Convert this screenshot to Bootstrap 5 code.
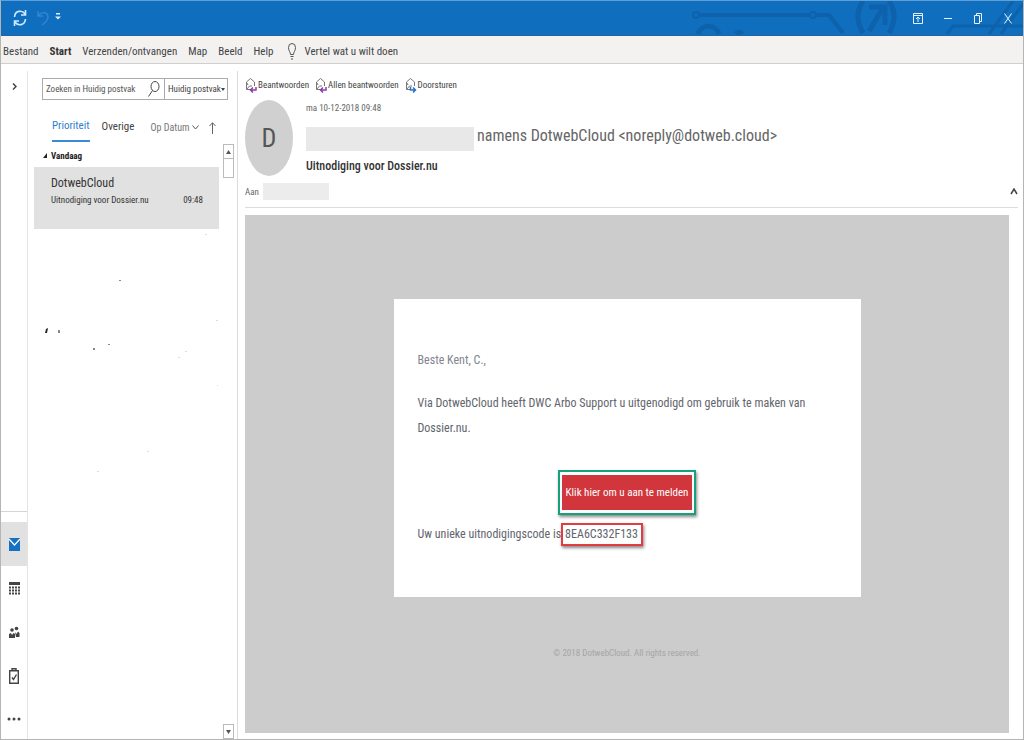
<!DOCTYPE html>
<html lang="nl">
<head>
<meta charset="utf-8">
<meta name="viewport" content="width=device-width, initial-scale=1">
<title>Uitnodiging voor Dossier.nu</title>
<link href="https://cdn.jsdelivr.net/npm/bootstrap@5.3.0/dist/css/bootstrap.min.css" rel="stylesheet">
<style>
body{font-family:"Roboto Condensed",Roboto,"Liberation Sans",sans-serif;font-size:9px;line-height:16px;color:#444}
.window{border:1px solid #b5b5b5;border-top-color:#5f9fd6}
.titlebar{background:#106ebe;height:35px;border-bottom:1px solid #2a62a0}
.circuit{width:340px;height:34px;right:0;top:0}
button{background:none;border:0;padding:0;color:inherit}
.qat{gap:10px;padding-left:12px}
.qat button:last-child{margin-left:-4px;margin-bottom:4px}
.winctl{width:30px;height:32px}
.ribbon{background:#f3f2f1;height:28px;border-bottom:1px solid #cfcfcf;gap:11px;padding:4px 0 0 2px;font-size:11px}
.ribbon a,.ribbon button{color:#444}
.ribbon b{color:#333}
.rail{width:27px;border-right:1px solid #e4e4e4;margin-top:7px}
.rail-main{border-top:1px solid #d4d4d4;padding-top:10px}
.rail-main button{height:44px;width:100%}
.rail-main button:last-child{height:41px}
.rail-main .on{background:#e1e1e1}
.mail-list{width:210px;border-right:1px solid #dcdcdc;padding-left:6px;margin-top:7px}
.search{border:1px solid #ababab;height:22px;margin:7px 9px 0 8px}
.search input{border:0;min-width:0;padding:0 0 0 3px;outline:0;color:#555}
.search input::placeholder{color:#555;opacity:1}
.search select{border:0;border-left:1px solid #ababab;background:none;appearance:none;width:63px;flex:none;padding:0 0 0 3px;color:#444}
.search .caret{right:2px;top:9px;pointer-events:none}
.tabs{margin:14px 0 0 18px;height:30px;font-size:11px;gap:12px}
.tabs button{height:28px;padding-bottom:3px}
.tabs .on{color:#2a7fd0;border-bottom:2px solid #3b8ad8}
.tabs .sort{font-size:10px;color:#777;gap:2px;padding-bottom:1px}
.day{height:23px;gap:4px;color:#222;padding-left:9px}
.msg{background:#e1e1e1;height:62px;padding:8px 16px 0 17px;color:#333}
.msg .from{font-size:12px;line-height:17px}
.bar{width:11px;margin-right:3px}
.bar span{border:1px solid #bbb;height:15px}
.bar .thumb{height:19px;border-top:0}
.reading{padding:13px 0 6px 7px}
.actions{gap:6px;height:16px}
.actions button{gap:1px;color:#444}
.avatar{width:48px;height:76px;border-radius:50%;background:#d0d0d0;font-size:26px;color:#555}
.head{gap:13px;margin-top:7px}
.date{line-height:16px;color:#666}
.sender{font-size:16px;line-height:26px;color:#666;margin-top:7px;gap:3px}
.redact{width:168px;height:24px;background:#e8e8e8;margin-top:4px}
.subject{font-size:12px;line-height:18px;margin:6px 0 0;color:#333;font-weight:500}
.to{gap:4px;height:32px;border-bottom:1px solid #dcdcdc;margin-right:5px;color:#666}
.to i{width:66px;height:17px;background:#ececec}
.canvas{background:#ccc;margin:7px 14px 0 0;padding-top:84px}
.letter{background:#fff;max-width:467px;width:90%;height:298px;padding:49px 24px 0;font-size:12px;line-height:25px;color:#62656d}
.letter .hi{color:#82868f;margin-bottom:18px}
.action-row{margin:29px 0 7px}
.cta{border:2px solid #16a07c;padding:3px 2px;box-shadow:1px 2px 3px #888}
.cta a{background:#d0363b;color:#fff;padding:0 4px;line-height:35px;font-size:11px}
.code{border:2px solid #e23b41;box-shadow:1px 2px 3px #888;padding:0 3px 0 2px;line-height:19px}
.foot{color:#a5a5a5;margin-top:48px}
</style>
</head>
<body>
<div class="window d-flex flex-column vh-100 overflow-hidden">
<header class="titlebar d-flex align-items-center justify-content-between position-relative flex-shrink-0">
  <svg class="circuit position-absolute" viewBox="0 0 340 34" fill="none" stroke="#0d62ab" stroke-width="4">
    <circle cx="13" cy="14" r="3" stroke-width="2"/><path d="M17 14H126"/><circle cx="130" cy="14" r="3" stroke-width="2"/><path d="M134 14H146L160 32"/>
    <path d="M15 33A11 11 0 0 1 36 33M53 33q3-4 6 0" stroke-width="5"/>
    <path d="M180 0Q170 15 180 32M206 0Q216 15 206 32" stroke-width="5"/><path d="M186 30L200 7M186 6H202V24" stroke-width="5"/>
    <path d="M264 33L270 25H340M306 33L330 0M318 33L340 3" stroke-width="3"/>
  </svg>
  <div class="qat d-flex align-items-center position-relative">
    <button aria-label="Alles verzenden/ontvangen"><svg width="14" height="18" viewBox="0 0 14 18" fill="none" stroke="#cfeaff" stroke-width="1.6"><path d="M1.500 8C2 1.500 9 .5 12 5M12.500 1V6H8M12.500 10C12 16.500 5 17.500 2 13M1.500 17V12H6"/></svg></button>
    <button aria-label="Ongedaan maken"><svg width="12" height="18" viewBox="0 0 12 18" fill="none" stroke="#3285cf" stroke-width="1.500"><path d="M1 2V7H6M1 7C6 1 11 4 11 8Q11 12 5 16"/></svg></button>
    <button aria-label="Aanpassen"><svg width="6" height="8" viewBox="0 0 6 8" fill="#d8efff"><path d="M1 0H5V1.500H1zM0 3.500H6L3 6.500z"/></svg></button>
  </div>
  <div class="d-flex position-relative">
    <button class="winctl" aria-label="Lint"><svg width="10" height="11" viewBox="0 0 10 11" fill="none" stroke="#e4f3ff"><path d="M.5 .5H9.500V10.500H.5zM.5 2.500H9.500M5 9V4M3 6L5 4L7 6"/></svg></button>
    <button class="winctl" aria-label="Minimaliseren"><svg width="8" height="11" viewBox="0 0 8 11" stroke="#e4f3ff"><path d="M0 5.500H8"/></svg></button>
    <button class="winctl" aria-label="Verkleinen"><svg width="8" height="11" viewBox="0 0 8 11" fill="none" stroke="#e4f3ff"><path d="M.5 2.500H5.500V10.500H.5zM2.500 2.500V.5H7.500V8.500H5.500"/></svg></button>
    <button class="winctl" aria-label="Sluiten"><svg width="8" height="11" viewBox="0 0 8 11" fill="none" stroke="#e4f3ff"><path d="M.5 .5L7.500 10.500M7.500 .5L.5 10.500"/></svg></button>
  </div>
</header>
<nav class="ribbon d-flex align-items-center flex-shrink-0">
  <a class="text-decoration-none" href="#">Bestand</a><a class="text-decoration-none" href="#"><b>Start</b></a><a class="text-decoration-none" href="#">Verzenden/ontvangen</a><a class="text-decoration-none" href="#">Map</a><a class="text-decoration-none" href="#">Beeld</a><a class="text-decoration-none" href="#">Help</a>
  <button class="d-flex align-items-center gap-2 ms-1"><svg width="8" height="17" viewBox="0 0 8 17" fill="none" stroke="#555"><path d="M2.500 11.500C2.500 9 .5 8 .5 4.500Q.5 .5 4 .5T7.500 4.500C7.500 8 5.500 9 5.500 11.500zM2.500 13.500H5.500M3 16H5"/></svg>Vertel wat u wilt doen</button>
</nav>
<div class="d-flex flex-grow-1 overflow-hidden">
  <aside class="rail d-flex flex-column justify-content-between flex-shrink-0">
    <button class="pt-2 mt-1" aria-label="Mappen uitvouwen"><svg class="d-block mx-auto" width="5" height="7" viewBox="0 0 5 7" fill="none" stroke="#444" stroke-width="1.500"><path d="M1 .5L4 3.500L1 6.500"/></svg></button>
    <div class="rail-main">
      <button class="on" aria-label="E-mail"><svg width="11" height="13" viewBox="0 0 11 13"><path fill="#1671c4" d="M0 0H11V13H0z"/><path d="M0 1L5.500 7L11 1" fill="none" stroke="#fff" stroke-width="1.200"/></svg></button>
      <button aria-label="Agenda"><svg width="11" height="14" viewBox="0 0 11 14" fill="none" stroke="#444"><path stroke-width="3" d="M0 1.500H11"/><path stroke-width="2" stroke-dasharray="2 1" d="M0 5.500H11M0 8.500H11M0 11.500H11"/></svg></button>
      <button aria-label="Personen"><svg width="11" height="13" viewBox="0 0 11 13" fill="#444"><circle cx="3" cy="4" r="1.800"/><circle cx="7.500" cy="2.500" r="1.800"/><path d="M0 12V8L2 7L3 9L4.500 7L6 8V12zM6 6L7.500 8L9 5.500L10.500 7V11H7z"/></svg></button>
      <button aria-label="Taken"><svg width="10" height="16" viewBox="0 0 10 16" fill="none" stroke="#444" stroke-width="1.400"><path d="M.7 2.700H9.300V15.300H.7zM3 2V.7H7V2M3 9.500L4.500 11.500L7.500 6.500"/></svg></button>
      <button aria-label="Meer"><svg width="14" height="4" viewBox="0 0 14 4" fill="#444"><circle cx="2" cy="2" r="1.500"/><circle cx="7" cy="2" r="1.500"/><circle cx="12" cy="2" r="1.500"/></svg></button>
    </div>
  </aside>
  <section class="mail-list d-flex flex-column flex-shrink-0">
    <div class="search d-flex flex-shrink-0 position-relative">
      <input class="flex-grow-1" type="text" placeholder="Zoeken in Huidig postvak" aria-label="Zoeken in Huidig postvak">
      <button class="pe-1" aria-label="Zoeken"><svg width="12" height="16" viewBox="0 0 12 16" fill="none" stroke="#444"><ellipse cx="7" cy="5.500" rx="4" ry="5"/><path d="M4.500 9.500L.5 15.500"/></svg></button>
      <select aria-label="Bereik"><option>Huidig postvak</option></select>
      <svg class="caret position-absolute" width="4" height="3" viewBox="0 0 4 3"><path d="M0 0H4L2 3z" fill="#444"/></svg>
    </div>
    <div class="tabs d-flex flex-shrink-0">
      <button class="on">Prioriteit</button><button>Overige</button>
      <button class="sort d-flex align-items-center ms-1">Op Datum<svg width="7" height="5" viewBox="0 0 7 5" fill="none" stroke="#555"><path d="M.5 .5L3.500 4L6.500 .5"/></svg><svg class="ms-2" width="7" height="12" viewBox="0 0 7 12" fill="none" stroke="#666"><path d="M3.500 12V1M.5 4L3.500 .7L6.500 4"/></svg></button>
    </div>
    <div class="d-flex flex-grow-1 overflow-hidden">
      <div class="flex-grow-1 me-1">
        <div class="day d-flex align-items-center fw-bold"><svg width="4" height="5" viewBox="0 0 4 5"><path d="M4 0V5H0z" fill="#222"/></svg>Vandaag</div>
        <div class="msg">
          <div class="from">DotwebCloud</div>
          <div class="subj d-flex justify-content-between"><span>Uitnodiging voor Dossier.nu</span><span>09:48</span></div>
        </div>
        <svg class="d-block" width="184" height="250" viewBox="0 0 184 250" fill="#888"><path fill="#222" d="M12 100L14 99L13 104H11z"/><path d="M24 101h2v3h-2zM85 51h2v1h-2zM59 119h2v2h-2zM74 115h2v1h-2z"/><path fill="#ddd" d="M171 5h2v1h-2zM182 91h2v1h-2zM144 128h2v1h-2zM151 122h2v1h-2zM183 156h1v1h-1zM113 222h2v1h-2zM63 242h2v1h-2z"/></svg>
      </div>
      <div class="bar d-flex flex-column flex-shrink-0">
        <span class="d-flex align-items-center justify-content-center"><svg width="5" height="4" viewBox="0 0 5 4"><path d="M0 4H5L2.500 0z" fill="#555"/></svg></span><span class="thumb"></span>
        <span class="d-flex align-items-center justify-content-center mt-auto"><svg width="5" height="4" viewBox="0 0 5 4"><path d="M0 0H5L2.500 4z" fill="#555"/></svg></span>
      </div>
    </div>
  </section>
  <main class="reading d-flex flex-column flex-grow-1">
    <div class="actions d-flex">
      <button class="d-flex align-items-center"><svg width="12" height="16" viewBox="0 0 12 16" fill="none" stroke="#777"><path d="M6 12.500H1.500V5L5.500 1.500L9.500 5V9M2 12L4.500 9H7M2 6L3 8"/><path stroke="#8a3fa8" stroke-width="1.500" d="M11 10V13H6M8 10.500L5.500 13L8 15.500"/></svg>Beantwoorden</button>
      <button class="d-flex align-items-center"><svg width="12" height="16" viewBox="0 0 12 16" fill="none" stroke="#777"><path d="M6 12.500H1.500V5L5.500 1.500L9.500 5V9M2 12L4.500 9H7M2 6L3 8"/><path stroke="#8a3fa8" stroke-width="1.500" d="M11 10V13H6M8 10.500L5.500 13L8 15.500"/></svg>Allen beantwoorden</button>
      <button class="d-flex align-items-center"><svg width="12" height="16" viewBox="0 0 12 16" fill="none" stroke="#777"><path d="M5 12.500H1.500V5L5.500 1.500L9.500 5V9M2 12L4.500 9H7M2 6L3 8"/><path stroke="#2c6fc4" stroke-width="1.500" d="M5.500 10V13H10M8 10.500L10.500 13L8 15.500"/></svg>Doorsturen</button>
    </div>
    <div class="head d-flex">
      <div class="avatar d-flex align-items-center justify-content-center flex-shrink-0">D</div>
      <div>
        <div class="date">ma 10-12-2018 09:48</div>
        <div class="sender d-flex"><i class="redact"></i><span>namens DotwebCloud &lt;noreply@dotweb.cloud&gt;</span></div>
        <h1 class="subject">Uitnodiging voor Dossier.nu</h1>
      </div>
    </div>
    <div class="to d-flex align-items-center"><span>Aan</span><i></i><button class="ms-auto" aria-label="Kop samenvouwen"><svg class="d-block" width="8" height="7" viewBox="0 0 8 7" fill="none" stroke="#444" stroke-width="1.500"><path d="M1 6L4 1L7 6"/></svg></button></div>
    <div class="canvas flex-grow-1">
      <article class="letter mx-auto">
        <p class="hi">Beste Kent, C.,</p>
        <p class="mb-0">Via DotwebCloud heeft DWC Arbo Support u uitgenodigd om gebruik te maken van Dossier.nu.</p>
        <div class="action-row d-flex justify-content-center"><div class="cta"><a class="d-block text-decoration-none" href="#">Klik hier om u aan te melden</a></div></div>
        <div class="d-flex align-items-center">Uw unieke uitnodigingscode is<span class="code">8EA6C332F133</span></div>
      </article>
      <p class="foot text-center">© 2018 DotwebCloud. All rights reserved.</p>
    </div>
  </main>
</div>
</div>
<script src="https://cdn.jsdelivr.net/npm/bootstrap@5.3.0/dist/js/bootstrap.bundle.min.js"></script>
</body>
</html>
